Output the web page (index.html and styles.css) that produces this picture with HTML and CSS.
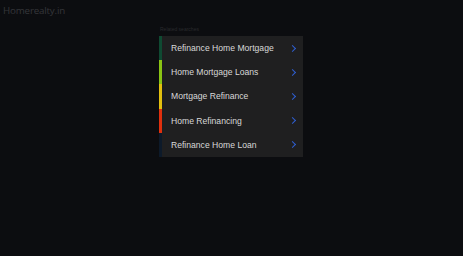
FILE: index.html
```html
<!DOCTYPE html>
<html lang="en">
<head>
    <meta charset="UTF-8">
    <title>Homerealty.in</title>
    <link rel="stylesheet" href="styles.css">
</head>
<body>
    <div class="site">Homerealty.in</div>
    <div class="wrap">
        <div class="related">Related searches</div>
        <ul class="links">
            <li class="c1"><span>Refinance Home Mortgage</span><i class="arrow"></i></li>
            <li class="c2"><span>Home Mortgage Loans</span><i class="arrow"></i></li>
            <li class="c3"><span>Mortgage Refinance</span><i class="arrow"></i></li>
            <li class="c4"><span>Home Refinancing</span><i class="arrow"></i></li>
            <li class="c5"><span>Refinance Home Loan</span><i class="arrow"></i></li>
        </ul>
    </div>
</body>
</html>
```

FILE: styles.css
```css
*{
    margin: 0;
    padding: 0;
}
body{
    background-color: #0c0d10;
    font-family: "Liberation Sans", Arial, sans-serif;
    height: 256px;
}
.site{
    color: #35363a;
    font-family: "Open Sans", sans-serif;
    font-size: 9.8px;
    padding: 4px 0 0 3px;
    letter-spacing: -0.2px;
}
.wrap{
    width: 144px;
    margin: 9px 0 0 159px;
}
.related{
    color: #2a2b2e;
    font-size: 5px;
    height: 10px;
    padding-left: 1px;
}
.links{
    list-style-type: none;
    background-color: #1f1f20;
}
.links li{
    height: 24.2px;
    display: flex;
    align-items: center;
    justify-content: space-between;
    border-left: 3px solid;
    padding: 0 8px 0 9px;
    color: #d8d8d8;
    font-size: 8.6px;
}
.c1{ border-left-color: #0f4a32 !important; }
.c2{ border-left-color: #8ac414 !important; }
.c3{ border-left-color: #e2c00f !important; }
.c4{ border-left-color: #e0300e !important; }
.c5{ border-left-color: #0d1a2a !important; }
.arrow{
    width: 4px;
    height: 4px;
    border-top: 1.5px solid #2f5fd0;
    border-right: 1.5px solid #2f5fd0;
    transform: rotate(45deg);
}
```
